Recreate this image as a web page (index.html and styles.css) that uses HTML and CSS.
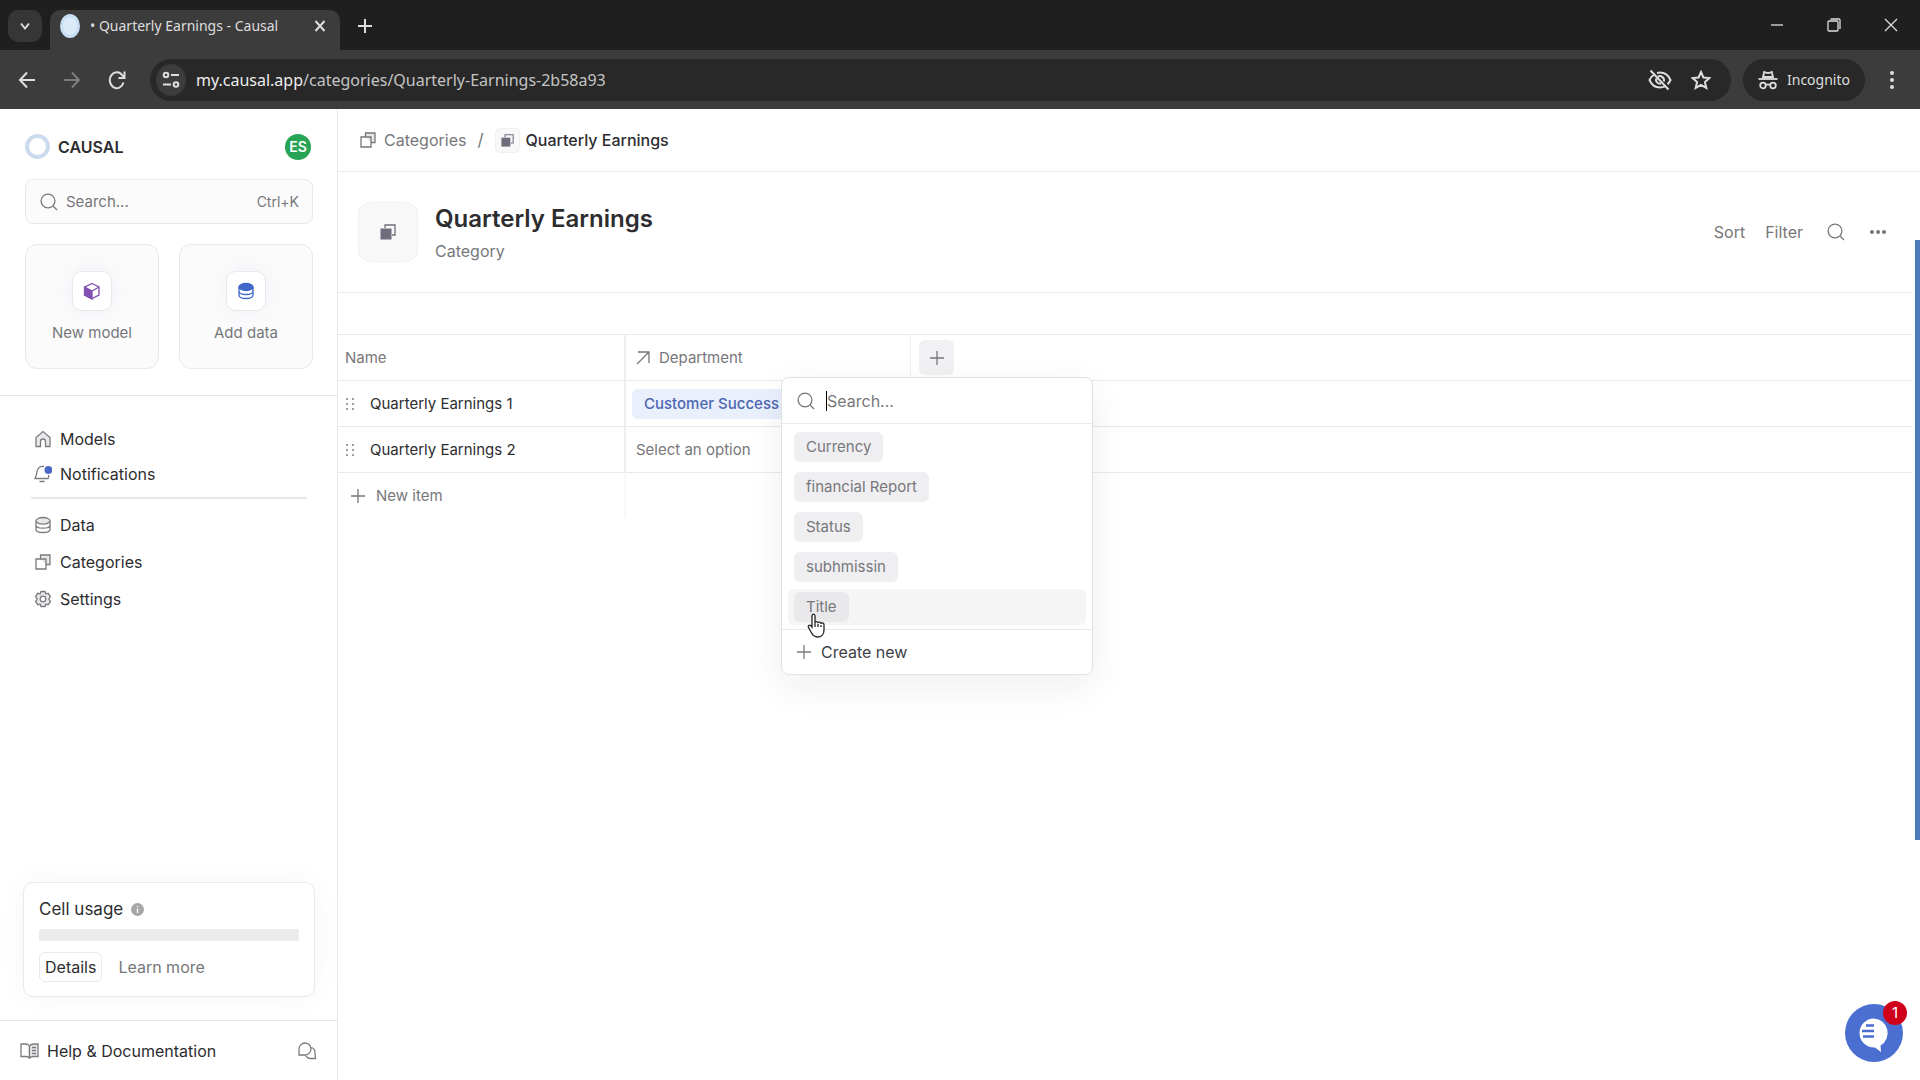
FILE: index.html
```html
<!DOCTYPE html>
<html lang="en">
<head>
<meta charset="utf-8">
<title>Quarterly Earnings - Causal</title>
<link rel="stylesheet" href="styles.css">
</head>
<body>
<svg class="sprite" width="0" height="0" aria-hidden="true">
  <symbol id="search" viewBox="0 0 18 18"><circle cx="8" cy="8" r="6.9"/><path d="M13 13l4 4"/></symbol>
  <symbol id="plus" viewBox="0 0 16 16"><path d="M8 1v14M1 8h14"/></symbol>
  <symbol id="stack" viewBox="0 0 16 16"><path class="tint" d="M5.5 5V1h9.5v9.5h-4"/><path d="M1 5h10v10H1z"/></symbol>
  <symbol id="stack-solid" viewBox="0 0 16 16"><path d="M5 4V1h10v10h-3"/><path d="M.5 4.500h11v11H.5z" fill="currentColor" stroke="none"/></symbol>
  <symbol id="grip" viewBox="0 0 10 14"><path stroke="none" fill="currentColor" d="M1 1h2v2H1zM7 1h2v2H7zM1 6h2v2H1zM7 6h2v2H7zM1 11h2v2H1zM7 11h2v2H7z"/></symbol>
</svg>

<header class="browser">
  <div class="tabstrip">
    <button class="tab-menu" aria-label="Search tabs"><svg width="12" height="12" viewBox="0 0 12 12"><path d="M2 3.500l4 5 4-5"/></svg></button>
    <div class="tab">
      <span class="favicon"></span>
      <span class="tab-title">• Quarterly Earnings - Causal</span>
      <button class="plain" aria-label="Close tab"><svg width="12" height="14" viewBox="0 0 12 14"><path d="M1.500 2l9 10M10.500 2l-9 10"/></svg></button>
    </div>
    <button class="plain new-tab" aria-label="New tab"><svg width="14" height="16" viewBox="0 0 14 16"><path d="M7 1v14M0 8h14"/></svg></button>
    <div class="window-buttons">
      <button class="plain" aria-label="Minimize"><svg width="14" height="14" viewBox="0 0 14 14"><path d="M1 7h12"/></svg></button>
      <button class="plain" aria-label="Restore"><svg width="14" height="14" viewBox="0 0 14 14"><rect x="1" y="3" width="10" height="10" rx="1"/><path d="M3.500 1H12a1 1 0 0 1 1 1v9"/></svg></button>
      <button class="plain" aria-label="Close window"><svg width="14" height="14" viewBox="0 0 14 14"><path d="M1 1l12 12M13 1L1 13"/></svg></button>
    </div>
  </div>
  <div class="toolbar">
    <button class="plain" aria-label="Back"><svg width="18" height="18" viewBox="0 0 18 18"><path d="M17 9H2M9 1.500L2 9l7 7.500"/></svg></button>
    <button class="plain dim" aria-label="Forward"><svg width="18" height="18" viewBox="0 0 18 18"><path d="M1 9h15M9 1.500L16 9l-7 7.500"/></svg></button>
    <button class="plain" aria-label="Reload"><svg width="18" height="20" viewBox="0 0 18 20"><path d="M15.500 12.500A7 8 0 1 1 14.500 5.500L16 7.500M16.500 1.500v6.500h-6"/></svg></button>
    <div class="omnibox">
      <span class="site-info"><svg width="18" height="20" viewBox="0 0 18 20"><circle cx="4" cy="5" r="2.300"/><path d="M9 5h8M1 14.500h8"/><circle cx="14" cy="14.500" r="2.300"/></svg></span>
      <span class="url"><b>my.causal.app</b>/categories/Quarterly-Earnings-2b58a93</span>
      <button class="plain" aria-label="Third-party cookies blocked"><svg width="24" height="22" viewBox="0 0 24 22"><path d="M6 5.500C4 7 2.500 9 1.500 11c2 4.600 6 7.500 10.500 7.500 1.900 0 3.600-.5 5.200-1.300M9 4c1-.3 2-.5 3-.5 4.500 0 8.500 2.900 10.500 7.500-.7 1.600-1.700 3-2.900 4.200M10 7.500c3-1.500 7 1.500 5.800 5M8.200 9.500c-1 3 1.600 5.600 4.800 5.200M2.500 1.500l18 19"/></svg></button>
      <button class="plain" aria-label="Bookmark"><svg width="20" height="20" viewBox="0 0 20 20"><path d="M10 2l2.400 5.500 6 .5-4.500 4 1.400 5.900L10 14.800l-5.300 3.100L6.100 12 1.600 8l6-.5z"/></svg></button>
    </div>
    <span class="incognito"><svg width="20" height="20" viewBox="0 0 20 20"><path d="M5 7l1.200-5 2.300.8h3l2.300-.8L15 7z"/><path d="M.5 9h19"/><circle cx="5" cy="15.500" r="2.800"/><circle cx="15" cy="15.500" r="2.800"/><path d="M8 15q2-1.200 4 0"/></svg>Incognito</span>
    <button class="plain" aria-label="Browser menu"><svg width="6" height="20" viewBox="0 0 6 20"><g fill="currentColor" stroke="none"><circle cx="3" cy="3" r="2"/><circle cx="3" cy="10" r="2"/><circle cx="3" cy="17" r="2"/></g></svg></button>
  </div>
</header>

<div class="app">
  <aside class="sidebar">
    <div class="side-top">
      <div class="brand"><span class="ring"></span><span class="brand-name">CAUSAL</span><span class="avatar">ES</span></div>
      <label class="side-search"><svg width="18" height="18"><use href="#search"/></svg><input type="search" placeholder="Search..." aria-label="Search"><kbd>Ctrl+K</kbd></label>
      <div class="actions">
        <button class="action model"><span class="tile"><svg width="18" height="18" viewBox="0 0 18 18"><path d="M9 1.500l7 3.500v8l-7 3.500L2 13V5zM9 9l7-4"/><path d="M1.500 5L9 9v8l-7.500-4z" fill="currentColor"/></svg></span>New model</button>
        <button class="action data"><span class="tile"><svg width="18" height="18" viewBox="0 0 18 18"><ellipse cx="9" cy="5" rx="7" ry="3.500" fill="currentColor"/><path d="M2 5v8c0 2 3 3.500 7 3.500s7-1.500 7-3.500V5M2 9c0 2 3 3.500 7 3.500S16 11 16 9"/></svg></span>Add data</button>
      </div>
    </div>
    <nav class="nav">
      <ul class="nav-main">
        <li><a href="#"><svg width="18" height="18" viewBox="0 0 18 18"><path class="tint" d="M2 16.500V7.500L9 1.500l7 6v9h-4.500v-5a2.500 2.500 0 0 0-5 0v5z"/></svg>Models</a></li>
        <li><a href="#"><svg width="18" height="18" viewBox="0 0 18 18"><path d="M10 1.500C6 .8 3.500 3 3 6.500c-.3 3-.8 4.500-2 7h13c.9-1.200.8-2 .6-3.500M5.500 16.500h5"/><circle cx="14.500" cy="5" r="4" fill="#4a68c4" stroke="none"/></svg>Notifications</a></li>
      </ul>
      <ul class="nav-more">
        <li><a href="#"><svg width="18" height="18" viewBox="0 0 18 18"><path d="M2 5v8.500C2 15.300 5 16.500 9 16.500s7-1.200 7-3V5M2 9c0 2 3 3.200 7 3.200S16 11 16 9"/><ellipse class="tint" cx="9" cy="4.800" rx="7" ry="3.300"/></svg>Data</a></li>
        <li><a href="#"><svg width="16" height="16"><use href="#stack"/></svg>Categories</a></li>
        <li><a href="#"><svg width="18" height="18" viewBox="0 0 18 18"><path class="tint" d="M7 1.500h4l.8 2.300 2.400-.5 2.200 3.300L14.800 9l1.600 2.400-2.200 3.300-2.400-.5-.8 2.300H7l-.8-2.300-2.400.5-2.200-3.300L3.200 9 1.600 6.600l2.200-3.300 2.400.5z"/><circle cx="9" cy="9" r="2.800" fill="#fff"/></svg>Settings</a></li>
      </ul>
    </nav>
    <section class="usage">
      <h2>Cell usage <svg width="13" height="13" viewBox="0 0 13 13"><circle cx="6.500" cy="6.500" r="6.500" fill="#a7a7a9" stroke="none"/><path d="M6.500 5.500V10M6.500 3v1" stroke="#fff"/></svg></h2>
      <div class="meter"></div>
      <div class="usage-links"><button class="details">Details</button><a href="#">Learn more</a></div>
    </section>
    <footer class="side-foot">
      <a href="#"><svg width="19" height="16" viewBox="0 0 19 16"><path d="M9.500 3v11.500M9.500 3C8.500 1.500 7 1 5 1H1v12.500h5c1.500 0 2.500.5 3.500 1.500"/><path class="tint" d="M9.500 3c1-1.500 2.500-2 4.500-2h4v12.500h-5c-1.500 0-2.500.5-3.500 1.500z"/><path d="M12 4.500h4M12 7.500h4M12 10.500h4"/></svg>Help &amp; Documentation</a>
      <button class="plain" aria-label="Feedback"><svg width="20" height="18" viewBox="0 0 20 18"><path d="M2 12V7.500a6 6 0 1 1 6 5.500H2zM14.500 5.500a5.500 5.500 0 0 1 3.500 5.500l.500 5.500H13a5.500 5.500 0 0 1-4.500-3.500"/></svg></button>
    </footer>
  </aside>

  <main class="main">
    <nav class="crumbs" aria-label="Breadcrumb">
      <a href="#"><svg width="16" height="16"><use href="#stack"/></svg>Categories</a>
      <span class="slash">/</span>
      <span class="crumb-tile"><svg width="13" height="13"><use href="#stack-solid"/></svg></span>
      <span class="here">Quarterly Earnings</span>
    </nav>
    <section class="hero">
      <span class="hero-tile"><svg width="16" height="16"><use href="#stack-solid"/></svg></span>
      <div class="hero-text"><h1>Quarterly Earnings</h1><p>Category</p></div>
      <div class="tools">
        <button class="plain">Sort</button>
        <button class="plain">Filter</button>
        <button class="plain" aria-label="Search"><svg width="18" height="18"><use href="#search"/></svg></button>
        <button class="plain" aria-label="More"><svg width="18" height="6" viewBox="0 0 18 6"><g fill="currentColor" stroke="none"><circle cx="3" cy="3" r="2"/><circle cx="9" cy="3" r="2"/><circle cx="15" cy="3" r="2"/></g></svg></button>
      </div>
    </section>
    <table class="grid">
      <colgroup><col class="col"><col class="col"><col></colgroup>
      <thead>
        <tr>
          <th>Name</th>
          <th class="dept"><div class="cell"><svg width="14" height="14" viewBox="0 0 14 14"><path d="M1 13L13 1M2 1h11v11"/></svg>Department</div></th>
          <th class="add-cell">
            <div class="add-wrap">
              <button class="add" aria-label="Add column"><svg width="16" height="16"><use href="#plus"/></svg></button>
              <div class="menu">
                <label class="menu-search"><svg width="18" height="18"><use href="#search"/></svg><input type="text" placeholder="Search..." aria-label="Search categories"></label>
                <ul class="options">
                  <li><button><span>Currency</span></button></li>
                  <li><button><span>financial Report</span></button></li>
                  <li><button><span>Status</span></button></li>
                  <li><button><span>subhmissin</span></button></li>
                  <li><button class="active"><span>Title</span></button>
                    <svg class="pointer" width="20" height="25" viewBox="0 0 20 25"><path d="M5 14V3c0-2.500 3-2.500 3 0v7c0-2 3-2 3 .3 0-1.800 3-1.600 3 .6 0-1.600 3-1.300 3 .8V17c0 4-2.500 7-6.500 7-3 0-5-2-6.500-5L1.500 14.500c-1-2.500 1.500-3.300 3.500-.5zM8 10v4M11 11v3M14 12v2"/></svg></li>
                </ul>
                <button class="create"><svg width="16" height="16"><use href="#plus"/></svg>Create new</button>
              </div>
            </div>
          </th>
        </tr>
      </thead>
      <tbody>
        <tr>
          <td><div class="cell item"><svg width="10" height="14"><use href="#grip"/></svg>Quarterly Earnings 1</div></td>
          <td class="dept"><span class="chip">Customer Success</span></td>
          <td></td>
        </tr>
        <tr>
          <td><div class="cell item"><svg width="10" height="14"><use href="#grip"/></svg>Quarterly Earnings 2</div></td>
          <td class="dept muted">Select an option</td>
          <td></td>
        </tr>
      </tbody>
      <tfoot>
        <tr>
          <td><button class="new-item"><svg width="16" height="16"><use href="#plus"/></svg>New item</button></td>
          <td class="dept"></td>
          <td></td>
        </tr>
      </tfoot>
    </table>
  </main>
</div>
<div class="edge"></div>
<button class="chat" aria-label="Open chat">
  <svg width="58" height="58" viewBox="0 0 58 58"><path d="M29 14.500a14.500 14.500 0 1 0 0 29h1l6 4.500-.5-6.500A14.500 14.500 0 0 0 29 14.500z" fill="#fff" stroke="none"/><path d="M21 21.500h8M17 27h12M18 32.500h11" stroke="#4b6fd0" stroke-width="2.500"/></svg>
  <span class="badge">1</span>
</button>
</body>
</html>
```
FILE: styles.css
```css
* { box-sizing: border-box; }
body {
  margin: 0;
  min-height: 100vh;
  display: flex;
  flex-direction: column;
  position: relative;
  background: #fff;
  color: #2d2d30;
  font: 15px/20px Inter, "Liberation Sans", sans-serif;
}
button, input, kbd { font: inherit; color: inherit; }
button { cursor: pointer; }
a { color: inherit; text-decoration: none; }
ul { list-style: none; margin: 0; padding: 0; }
h1, h2, p { margin: 0; }
svg { flex: none; display: block; fill: none; stroke: currentColor; stroke-width: 1.3; }
.sprite { position: absolute; }
.tint { fill: #e8e8ea; }
.plain { border: 0; padding: 0; background: none; display: flex; align-items: center; }

/* Browser frame */
.browser { background: #3c3c3c; color: #dedede; font-family: "Noto Sans", "Open Sans", sans-serif; }
.browser svg { stroke-width: 2; }
.tabstrip { height: 50px; padding: 10px 22px 0 8px; display: flex; background: #1f1f1f; }
.tab-menu {
  width: 34px; height: 32px; margin-right: 8px;
  display: grid; place-items: center;
  border: 0; border-radius: 10px; background: #363636;
}
.tab {
  width: 290px; padding: 0 14px 8px 10px;
  display: flex; align-items: center; gap: 10px;
  border-radius: 10px 10px 0 0; background: #3c3c3c;
}
.favicon { width: 20px; height: 24px; border-radius: 50%; background: #dcebfa; border: 3px solid #c8def4; }
.tab-title { flex: 1; font-size: 14px; white-space: nowrap; }
.new-tab { margin-left: 18px; padding-bottom: 8px; }
.window-buttons { margin-left: auto; display: flex; gap: 43px; padding-bottom: 10px; }
.window-buttons svg { stroke-width: 1.3; }
.toolbar { height: 59px; padding: 0 25px 0 18px; display: flex; align-items: center; gap: 27px; }
.dim { color: #7d7d7d; }
.omnibox {
  flex: 1; height: 42px; margin: 0 -15px 0 -3px; padding: 0 20px 0 6px;
  display: flex; align-items: center; gap: 19px;
  border-radius: 21px; background: #282828;
}
.site-info { width: 30px; height: 32px; margin-right: -9px; display: grid; place-items: center; border-radius: 50%; background: #3c3c3c; }
.url { flex: 1; font-size: 16px; color: #c4c4c4; }
.url b { font-weight: 400; color: #ededed; }
.incognito {
  width: 122px; height: 42px; padding-left: 15px;
  display: flex; align-items: center; gap: 9px;
  border-radius: 21px; background: #282828; font-size: 14px;
}
.incognito svg { stroke-width: 1.8; }
.incognito + .plain { margin-left: -3px; }

/* Sidebar */
.app { flex: 1; display: flex; }
.sidebar { flex: none; width: 338px; display: flex; flex-direction: column; border-right: 1px solid #e6e6e8; }
.side-top { padding: 25px 24px 26px 25px; border-bottom: 1px solid #e6e6e8; }
.brand { display: flex; align-items: center; gap: 8px; height: 25px; }
.ring { width: 25px; height: 25px; border: 4px solid #cbdaec; border-radius: 50%; }
.brand-name { font-size: 16px; font-weight: 600; }
.avatar {
  width: 26px; height: 26px; margin: 0 2px 0 auto; border-radius: 50%;
  background: #27a455; color: #fff; font-size: 14px; font-weight: 600; line-height: 26px; text-align: center;
}
.side-search {
  height: 45px; margin: 20px 0; padding: 0 13px 0 14px;
  display: flex; align-items: center; gap: 8px;
  border: 1px solid #e9e9eb; border-radius: 8px; background: #fbfbfc; color: #77777a;
}
input { flex: 1; min-width: 0; border: 0; padding: 0; background: none; outline: 0; }
input::placeholder { color: #77777a; opacity: 1; }
kbd { font-size: 14px; }
.actions { display: grid; grid-template-columns: 1fr 1fr; gap: 20px; }
.action {
  height: 125px; padding: 0;
  display: flex; flex-direction: column; align-items: center; justify-content: center; gap: 12px;
  border: 1px solid #e9e9eb; border-radius: 12px; background: #fbfbfc; color: #77777a;
}
.tile {
  width: 40px; height: 40px; display: grid; place-items: center;
  border: 1px solid #e9e9eb; border-radius: 10px; background: #fff; box-shadow: 0 0 24px #f0eff6;
}
.model .tile { color: #8250b4; }
.data .tile { color: #3f66c8; }
.nav { padding: 25px 30px 25px 31px; font-size: 16px; }
.nav a { display: flex; align-items: center; gap: 8px; padding: 0 3px; }
.nav svg, .side-foot svg { color: #7b7b7f; }
.nav li svg { width: 18px; }
.nav-main { padding-bottom: 6px; border-bottom: 2px solid #e8e8ea; }
.nav-main a { height: 35px; }
.nav-more { padding-top: 7px; }
.nav-more a { height: 37px; }
.usage {
  margin: auto 22px 23px 23px; padding: 15px 15px 14px;
  border: 1px solid #e9e9eb; border-radius: 10px; box-shadow: 0 0 28px #f6f6f7;
}
.usage h2 { display: flex; align-items: center; gap: 8px; font-size: 17px; font-weight: 400; line-height: 22px; }
.meter { height: 12px; margin: 9px 0 11px; border-radius: 2px; background: #ebebed; }
.usage-links { display: flex; align-items: center; gap: 16px; color: #77777a; font-size: 16px; }
.details { height: 30px; padding: 0 5px; border: 1px solid #e9e9eb; border-radius: 6px; background: #fff; color: #2d2d30; }
.side-foot { height: 60px; padding: 0 20px; display: flex; align-items: center; justify-content: space-between; border-top: 1px solid #e6e6e8; font-size: 16px; }
.side-foot a { display: flex; align-items: center; gap: 8px; }

/* Main */
.main { flex: 1; min-width: 0; padding-right: 8px; color: #77777a; }
.crumbs { height: 63px; margin-right: -8px; padding-left: 22px; display: flex; align-items: center; border-bottom: 1px solid #e9e9eb; font-size: 16px; }
.crumbs a { display: flex; align-items: center; gap: 8px; }
.slash { margin: 0 11px; font-size: 17px; }
.crumb-tile, .hero-tile { display: grid; place-items: center; border: 1px solid #f0f0f2; background: #f8f8f9; color: #6f6d7b; }
.crumb-tile { width: 25px; height: 25px; margin-right: 6px; border-radius: 5px; }
.here { color: #2d2d30; font-weight: 500; }
.hero { height: 121px; padding: 0 25px 0 20px; display: flex; align-items: center; border-bottom: 1px solid #e9e9eb; font-size: 16px; }
.hero-tile { width: 60px; height: 60px; border-radius: 12px; }
.hero-text { margin-left: 17px; }
h1 { font-size: 24px; font-weight: 600; line-height: 32px; color: #2d2d30; }
.hero p { padding-top: 6px; }
.tools { margin-left: auto; display: flex; align-items: center; gap: 24px; }
.tools .plain:nth-child(2) { margin-left: -4px; }
.grid { width: 100%; margin-top: 41px; table-layout: fixed; border-spacing: 0; }
.col { width: 286px; }
.grid th, .grid td { height: 46px; padding: 0 7px; border-top: 1px solid #e9e9eb; text-align: left; font-weight: 400; }
.grid .dept { padding-left: 10px; border-left: 2px solid #efeff1; }
.grid tfoot .dept { border-left-color: #f8f8f9; }
.grid tbody { color: #2d2d30; }
.grid .muted { color: #77777a; }
.cell { display: flex; align-items: center; gap: 9px; }
.item { gap: 15px; }
.item svg { color: #9c9ca0; }
.grid .chip {
  display: inline-block; height: 30px; margin-left: -4px; padding: 0 12px; line-height: 30px;
  border-radius: 6px; background: #eaeffc; color: #4d67b1; font-weight: 500; vertical-align: middle;
}
.new-item { padding: 0 5px; display: flex; align-items: center; gap: 10px; border: 0; background: none; }
.grid .add-cell { padding: 0 8px; border-left: 1px solid #f2f2f4; }
.add-wrap { position: relative; width: 35px; }
.add { width: 35px; height: 35px; display: grid; place-items: center; border: 0; border-radius: 6px; background: #f1f1f3; }

/* Column picker */
.menu {
  position: absolute; top: 37px; left: -138px; z-index: 2; width: 312px;
  border: 1px solid #e2e2e5; border-radius: 8px; background: #fff;
  box-shadow: 0 12px 36px rgba(30, 30, 50, .07);
}
.menu-search { height: 46px; padding: 0 15px; display: flex; align-items: center; gap: 11px; border-bottom: 1px solid #e9e9eb; }
.menu-search input { height: 20px; border-left: 1px solid #000; font-size: 16px; }
.options { padding: 3px 6px 2px; border-bottom: 1px solid #e9e9eb; }
.options li { position: relative; padding: 2px 0; height: 40px; }
.options button { width: 100%; height: 36px; padding: 0 6px; display: flex; align-items: center; border: 0; border-radius: 6px; background: none; }
.options span { height: 30px; padding: 0 12px; line-height: 30px; border-radius: 6px; background: #efeff2; }
.options .active { background: #f5f5f6; }
.options .active span { background: #e9e9ec; }
.pointer { position: absolute; left: 19px; top: 26px; color: #222; fill: #fff; z-index: 3; }
.create { width: 100%; height: 44px; padding: 0 14px; display: flex; align-items: center; gap: 9px; border: 0; background: none; color: #414145; font-size: 16px; }
.create svg { color: #7b7b7f; }

/* Overlays */
.edge { position: absolute; right: 0; top: 240px; width: 5px; height: 600px; background: #4d7cbd; }
.chat { position: absolute; right: 17px; bottom: 18px; width: 58px; height: 58px; padding: 0; border: 0; border-radius: 50%; background: #4b6fd0; }
.badge {
  position: absolute; right: -4px; top: -3px; width: 24px; height: 24px;
  border-radius: 50%; background: #d0021b; color: #fff; font-size: 15px; line-height: 24px;
}
```
